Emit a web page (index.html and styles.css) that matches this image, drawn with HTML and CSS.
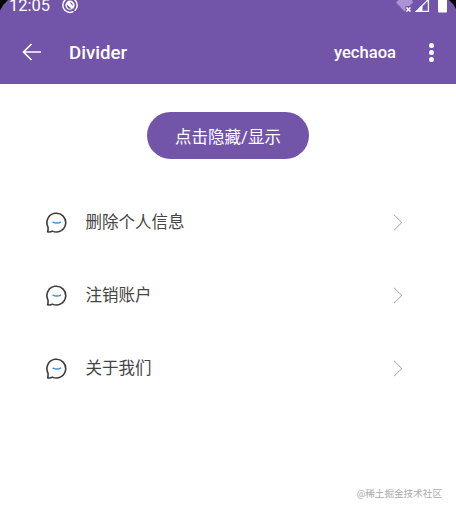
FILE: index.html
```
<!DOCTYPE html>
<html lang="zh-CN">
  <head>
    <meta charset="UTF-8" />
    <meta name="viewport" content="width=device-width, initial-scale=1.0" />
    <title>Divider</title>
    <link rel="stylesheet" href="styles.css">
  </head>
  <body>
    <div class="screen">
      <header class="header">
        <div class="status-bar">
          <span class="time">12:05</span>
          <svg class="status-icon" width="18" height="14" viewBox="0 0 18 14">
            <circle cx="9" cy="5.2" r="7.2" fill="none" stroke="#fff" stroke-width="1.5" />
            <circle cx="9" cy="5.2" r="4.6" fill="#fff" />
            <path d="M5.8 4.5L10.5 8.6A3.6 3.6 0 0 1 5.8 4.5zM8.5 2.2Q12 2.4 12 6z" fill="#7254a9" />
            <path d="M11 9L14 12" stroke="#7254a9" stroke-width="1.2" />
          </svg>
          <svg class="signal" width="52" height="13" viewBox="0 0 52 13">
            <path d="M2.5 0H16L17 2.5L13.5 6H9.5V11L8.5 11.5L0 2.5z" fill="#aa93d4" />
            <path d="M10.5 7.5L14.5 11.5M14.5 7.5L10.5 11.5" stroke="#fff" stroke-width="1.6" />
            <path d="M20.5 11.4L32.4 -.5V11.4z" fill="none" stroke="#fff" stroke-width="1.3" />
            <path d="M19 12L26.5 4.5V12z" fill="#fff" />
            <rect x="42" y="-3" width="9" height="15.5" rx="1" fill="#fff" />
          </svg>
        </div>
        <div class="toolbar">
          <a class="back" href="#">
            <svg width="20" height="18" viewBox="0 0 20 18">
              <path d="M19 9H1.5M9.5 1L1.5 9L9.5 17" fill="none" stroke="#fff" stroke-width="1.6" />
            </svg>
          </a>
          <h1 class="title">Divider</h1>
          <span class="action">yechaoa</span>
          <a class="more" href="#">
            <i></i>
            <i></i>
            <i></i>
          </a>
        </div>
        <!-- rounded screen corners -->
        <svg class="corner left" width="9" height="11" viewBox="0 0 9 11">
          <path d="M0 0H8Q3 4 0 10.5z" fill="#000" />
        </svg>
        <svg class="corner right" width="9" height="11" viewBox="0 0 9 11">
          <path d="M9 0H2Q6 3 9 9z" fill="#000" />
        </svg>
      </header>

      <main class="content">
        <button class="toggle">点击隐藏/显示</button>
        <ul class="list">
          <li>
            <svg class="chat" width="22" height="22" viewBox="0 0 22 22">
              <path class="bubble" d="M1.6 19.8Q2.4 17.6 1.9 14.8A9.4 9.4 0 1 1 6.3 19.1Q4.4 20.4 1.6 19.8z" />
              <path class="smile" d="M6.6 9.8Q10.9 12.4 15 9.8" />
            </svg>
            <span class="name">删除个人信息</span>
            <svg class="arrow" width="10" height="17" viewBox="0 0 10 17">
              <path d="M1 .8L8.8 8.5L1 16.2" />
            </svg>
          </li>
          <li>
            <svg class="chat" width="22" height="22" viewBox="0 0 22 22">
              <path class="bubble" d="M1.6 19.8Q2.4 17.6 1.9 14.8A9.4 9.4 0 1 1 6.3 19.1Q4.4 20.4 1.6 19.8z" />
              <path class="smile" d="M6.6 9.8Q10.9 12.4 15 9.8" />
            </svg>
            <span class="name">注销账户</span>
            <svg class="arrow" width="10" height="17" viewBox="0 0 10 17">
              <path d="M1 .8L8.8 8.5L1 16.2" />
            </svg>
          </li>
          <li>
            <svg class="chat" width="22" height="22" viewBox="0 0 22 22">
              <path class="bubble" d="M1.6 19.8Q2.4 17.6 1.9 14.8A9.4 9.4 0 1 1 6.3 19.1Q4.4 20.4 1.6 19.8z" />
              <path class="smile" d="M6.6 9.8Q10.9 12.4 15 9.8" />
            </svg>
            <span class="name">关于我们</span>
            <svg class="arrow" width="10" height="17" viewBox="0 0 10 17">
              <path d="M1 .8L8.8 8.5L1 16.2" />
            </svg>
          </li>
        </ul>
      </main>

      <footer class="mark">@稀土掘金技术社区</footer>
    </div>
  </body>
</html>
```
FILE: styles.css
```
* {
  margin: 0;
  padding: 0;
  box-sizing: border-box;
}
body {
  font-family: Roboto, "Noto Sans CJK SC", sans-serif;
  background: #fff;
}
ul {
  list-style: none;
}
svg {
  display: block;
  flex: none;
}
.screen {
  display: flex;
  flex-direction: column;
  height: 512px;
  overflow: hidden;
}

/* header */
.header {
  position: relative;
  height: 84px;
  background: #7254a9;
  color: #fff;
}
.status-bar {
  display: flex;
  height: 20px;
  padding: 0 8px 0 9px;
}
.time {
  width: 41px;
  margin-top: -3px;
  font-size: 16.5px;
  line-height: 18px;
}
.status-icon {
  margin-left: 11px;
}
.signal {
  margin-left: auto;
}
.toolbar {
  display: flex;
  align-items: center;
  height: 64px;
  padding: 0 22px;
}
.title {
  margin-left: 27px;
  padding-top: 1px;
  font-size: 18.7px;
  font-weight: 500;
}
.action {
  margin-left: auto;
  font-size: 16.6px;
  font-weight: 500;
}
.more {
  display: flex;
  flex-direction: column;
  gap: 2px;
  margin-left: 33px;
}
.more i {
  width: 5px;
  height: 5px;
  border-radius: 50%;
  background: #fff;
}
.corner {
  position: absolute;
  top: 0;
}
.left {
  left: 0;
}
.right {
  right: 0;
}

/* content */
.content {
  display: flex;
  flex: 1;
  flex-direction: column;
  align-items: center;
  padding-top: 28px;
}
.toggle {
  width: 162px;
  height: 47px;
  border: none;
  border-radius: 24px;
  background: #7254a9;
  color: #fff;
  font-family: inherit;
  font-size: 16.5px;
}
.list {
  width: 100%;
  margin-top: 27px;
}
.list li {
  display: flex;
  align-items: center;
  height: 73px;
  padding: 0 53px 0 46px;
}
.bubble {
  fill: none;
  stroke: #3c3c3c;
  stroke-width: 1.6;
  stroke-linejoin: round;
}
.smile {
  fill: none;
  stroke: #3c8ed0;
  stroke-width: 1.5;
}
.name {
  margin-left: 17.5px;
  color: #444;
  font-size: 16.5px;
  line-height: 24px;
}
.arrow {
  margin-left: auto;
}
.arrow path {
  fill: none;
  stroke: #a0a0a0;
  stroke-width: 1;
}
.mark {
  padding: 0 14px 10px;
  color: #aaa;
  font-size: 9.6px;
  line-height: 16px;
  text-align: right;
}
```
